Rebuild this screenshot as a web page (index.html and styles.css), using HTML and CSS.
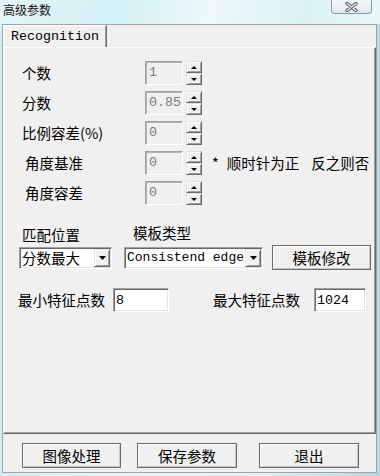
FILE: index.html
```html
<!DOCTYPE html>
<html lang="zh-CN">
<head>
    <meta charset="UTF-8">
    <title>高级参数</title>
    <link rel="stylesheet" href="styles.css">
</head>
<body>
    <div class="window">
        <div class="titlebar">
            <span class="title">高级参数</span>
            <div class="close-btn">
                <svg width="13" height="10" viewBox="0 0 13 10">
                    <path d="M2 1.5 L11 8.5 M11 1.5 L2 8.5" stroke="#4d5661" stroke-width="3.4" stroke-linecap="round"/>
                    <path d="M2 1.5 L11 8.5 M11 1.5 L2 8.5" stroke="#eef1f4" stroke-width="1.5" stroke-linecap="round"/>
                </svg>
            </div>
        </div>

        <div class="client">
            <!-- Tab header -->
            <div class="tabs">
                <div class="tab mono">Recognition</div>
            </div>

            <div class="pane">
                <!-- Spin rows -->
                <div class="spin-rows">
                    <div class="spin-row">
                        <span class="row-label">个数</span>
                        <div class="spin-box mono">1</div>
                        <div class="spinner"><span class="spin-btn"><i class="tri-up"></i></span><span class="spin-btn"><i class="tri-down"></i></span></div>
                    </div>
                    <div class="spin-row">
                        <span class="row-label">分数</span>
                        <div class="spin-box mono">0.85</div>
                        <div class="spinner"><span class="spin-btn"><i class="tri-up"></i></span><span class="spin-btn"><i class="tri-down"></i></span></div>
                    </div>
                    <div class="spin-row">
                        <span class="row-label">比例容差(%)</span>
                        <div class="spin-box mono">0</div>
                        <div class="spinner"><span class="spin-btn"><i class="tri-up"></i></span><span class="spin-btn"><i class="tri-down"></i></span></div>
                    </div>
                    <div class="spin-row">
                        <span class="row-label indent">角度基准</span>
                        <div class="spin-box mono">0</div>
                        <div class="spinner"><span class="spin-btn"><i class="tri-up"></i></span><span class="spin-btn"><i class="tri-down"></i></span></div>
                        <span class="note"><span class="star">*</span><span>顺时针为正</span><span class="note-2">反之则否</span></span>
                    </div>
                    <div class="spin-row">
                        <span class="row-label indent">角度容差</span>
                        <div class="spin-box mono">0</div>
                        <div class="spinner"><span class="spin-btn"><i class="tri-up"></i></span><span class="spin-btn"><i class="tri-down"></i></span></div>
                    </div>
                </div>

                <!-- Match options -->
                <div class="match-labels">
                    <span class="match-label first">匹配位置</span>
                    <span class="match-label second">模板类型</span>
                </div>
                <div class="match-row">
                    <div class="combo combo-pos">
                        <span class="combo-text">分数最大</span>
                        <span class="combo-btn"><svg width="7" height="4" viewBox="0 0 7 4"><polygon points="0,0 7,0 3.5,4" fill="#000"/></svg></span>
                    </div>
                    <div class="combo combo-type">
                        <span class="combo-text mono">Consistend edge</span>
                        <span class="combo-btn"><svg width="7" height="4" viewBox="0 0 7 4"><polygon points="0,0 7,0 3.5,4" fill="#000"/></svg></span>
                    </div>
                    <button class="btn btn-edit" type="button">模板修改</button>
                </div>

                <!-- Feature points -->
                <div class="feature-row">
                    <span class="feature-label min">最小特征点数</span>
                    <input class="edit mono edit-min" type="text" value="8">
                    <span class="feature-label max">最大特征点数</span>
                    <input class="edit mono edit-max" type="text" value="1024">
                </div>
            </div>

            <!-- Bottom buttons -->
            <div class="actions">
                <button class="btn btn-action" type="button">图像处理</button>
                <button class="btn btn-action btn-save" type="button">保存参数</button>
                <button class="btn btn-action btn-exit" type="button">退出</button>
            </div>
        </div>
    </div>
</body>
</html>
```

FILE: styles.css
```css
/* Window frame */
body {
    margin: 0;
    font-family: "Noto Sans CJK SC", sans-serif;
    font-size: 14.5px;
    color: #000;
    background: linear-gradient(90deg, #d6eef3 0%, #e6f6f8 35%, #dff1f5 70%, #b9d6e0 100%);
}

.window {
    width: 380px;
    height: 476px;
    display: flex;
    flex-direction: column;
}

.mono {
    font-family: "Liberation Mono", "Noto Sans CJK SC", monospace;
    font-size: 13.33px;
}

/* Title bar */
.titlebar {
    height: 24px;
    display: flex;
    align-items: flex-start;
    background: linear-gradient(100deg, #e4f5f8 0%, #d2eff3 30%, #eef9fb 55%, #dbf2f5 80%, #e9f6f8 100%);
}

.title {
    margin: 3px 0 0 3px;
    font-size: 12px;
    line-height: 14px;
    color: #111;
}

.close-btn {
    margin-left: auto;
    margin-right: 8px;
    width: 41px;
    height: 14px;
    box-sizing: border-box;
    border: 1px solid #8d9ba6;
    border-top: none;
    border-radius: 0 0 4px 4px;
    background: linear-gradient(#f4f8fa, #e2eaee);
    display: flex;
    align-items: center;
    justify-content: center;
}

/* Client area */
.client {
    margin: 0 3px 3px 2px;
    flex: 1;
    background: #f0f0f0;
    border: 1px solid #9aa5ad;
    display: flex;
    flex-direction: column;
}

.tabs {
    height: 22px;
    display: flex;
}

.tab {
    width: 104px;
    box-sizing: border-box;
    padding: 2px 0 0 7px;
    line-height: 18px;
    border-top: 1px solid #fff;
    border-left: 1px solid #fff;
    border-right: 1px solid #696969;
    box-shadow: inset -1px 0 #a0a0a0;
}

.pane {
    height: 387px;
    box-sizing: border-box;
    padding: 13px 0 0 15px;
    border-top: 1px solid #fff;
    border-left: 1px solid #fff;
    border-right: 1px solid #696969;
    border-bottom: 1px solid #696969;
    box-shadow: inset -1px -1px #a0a0a0;
}

/* Spin rows */
.spin-rows {
    display: flex;
    flex-direction: column;
    gap: 6px;
}

.spin-row {
    height: 24px;
    display: flex;
    align-items: center;
}

.row-label {
    width: 126px;
    box-sizing: border-box;
    padding-left: 3px;
    line-height: 16px;
}

.row-label.indent {
    padding-left: 6px;
}

.spin-box {
    width: 38px;
    height: 24px;
    box-sizing: border-box;
    margin-right: 3px;
    padding: 3px 0 0 3px;
    line-height: 16px;
    color: #7a7a7a;
    border: 1px solid;
    border-color: #a0a0a0 #fff #fff #a0a0a0;
    box-shadow: inset 1px 1px #b4b4b4;
}

.spinner {
    width: 16px;
    height: 24px;
    display: flex;
    flex-direction: column;
}

.spin-btn {
    height: 12px;
    box-sizing: border-box;
    display: flex;
    align-items: center;
    justify-content: center;
    border: 1px solid;
    border-color: #e3e3e3 #696969 #696969 #e3e3e3;
    box-shadow: inset 1px 1px #fff, inset -1px -1px #a0a0a0;
}

.tri-up {
    border-left: 3px solid transparent;
    border-right: 3px solid transparent;
    border-bottom: 3px solid #000;
}

.tri-down {
    border-left: 3px solid transparent;
    border-right: 3px solid transparent;
    border-top: 3px solid #000;
}

.note {
    margin-left: 10px;
    line-height: 16px;
    display: flex;
}

.star {
    margin-right: 8px;
}

.note-2 {
    margin-left: 12px;
}

/* Match options */
.match-labels {
    margin-top: 20px;
    display: flex;
    line-height: 16px;
}

.match-label.first {
    width: 114px;
    box-sizing: border-box;
    padding-left: 3px;
    margin-top: 2px;
}

.match-row {
    margin-top: 2px;
    height: 25px;
    display: flex;
    align-items: center;
}

.combo {
    height: 22px;
    box-sizing: border-box;
    display: flex;
    align-items: center;
    background: #fff;
    border: 1px solid;
    border-color: #a0a0a0 #fff #fff #a0a0a0;
    box-shadow: inset 1px 1px #696969, inset -1px -1px #e3e3e3;
    padding: 2px 1px 2px 2px;
}

.combo-pos {
    width: 93px;
}

.combo-type {
    width: 139px;
    margin-left: 12px;
}

.combo-text {
    flex: 1;
    line-height: 16px;
    white-space: nowrap;
}

.combo-type .combo-text {
    font-size: 13px;
}

.combo-btn {
    width: 16px;
    height: 18px;
    flex: none;
    box-sizing: border-box;
    display: flex;
    align-items: center;
    justify-content: center;
    background: #f0f0f0;
    border: 1px solid;
    border-color: #e3e3e3 #696969 #696969 #e3e3e3;
    box-shadow: inset 1px 1px #fff, inset -1px -1px #a0a0a0;
}

/* Buttons */
.btn {
    height: 25px;
    box-sizing: border-box;
    padding: 0;
    font-family: "Noto Sans CJK SC", sans-serif;
    font-size: 14.5px;
    line-height: 16px;
    color: #000;
    background: #f0f0f0;
    border: 1px solid #6a6a6a;
    box-shadow: inset 1px 1px #fdfdfd, inset -1px -1px #c8c8c8;
    border-radius: 0;
}

.btn-edit {
    width: 99px;
    margin-left: 9px;
}

/* Feature points */
.feature-row {
    margin-top: 18px;
    height: 24px;
    display: flex;
    align-items: center;
}

.feature-label {
    line-height: 16px;
}

.feature-label.min {
    width: 95px;
    margin-left: -1px;
}

.feature-label.max {
    width: 101px;
    margin-left: 44px;
}

.edit {
    height: 24px;
    box-sizing: border-box;
    padding: 0 0 0 2px;
    margin: 0;
    color: #000;
    background: #fff;
    border: 1px solid;
    border-color: #a0a0a0 #fff #fff #a0a0a0;
    box-shadow: inset 1px 1px #696969, inset -1px -1px #e3e3e3;
    outline: none;
}

.edit-min {
    width: 56px;
}

.edit-max {
    width: 52px;
}

/* Bottom actions */
.actions {
    padding: 9px 0 0 19px;
    display: flex;
}

.btn-action {
    width: 99px;
}

.btn-save {
    width: 100px;
    margin-left: 16px;
}

.btn-exit {
    width: 100px;
    margin-left: 22px;
}
```
